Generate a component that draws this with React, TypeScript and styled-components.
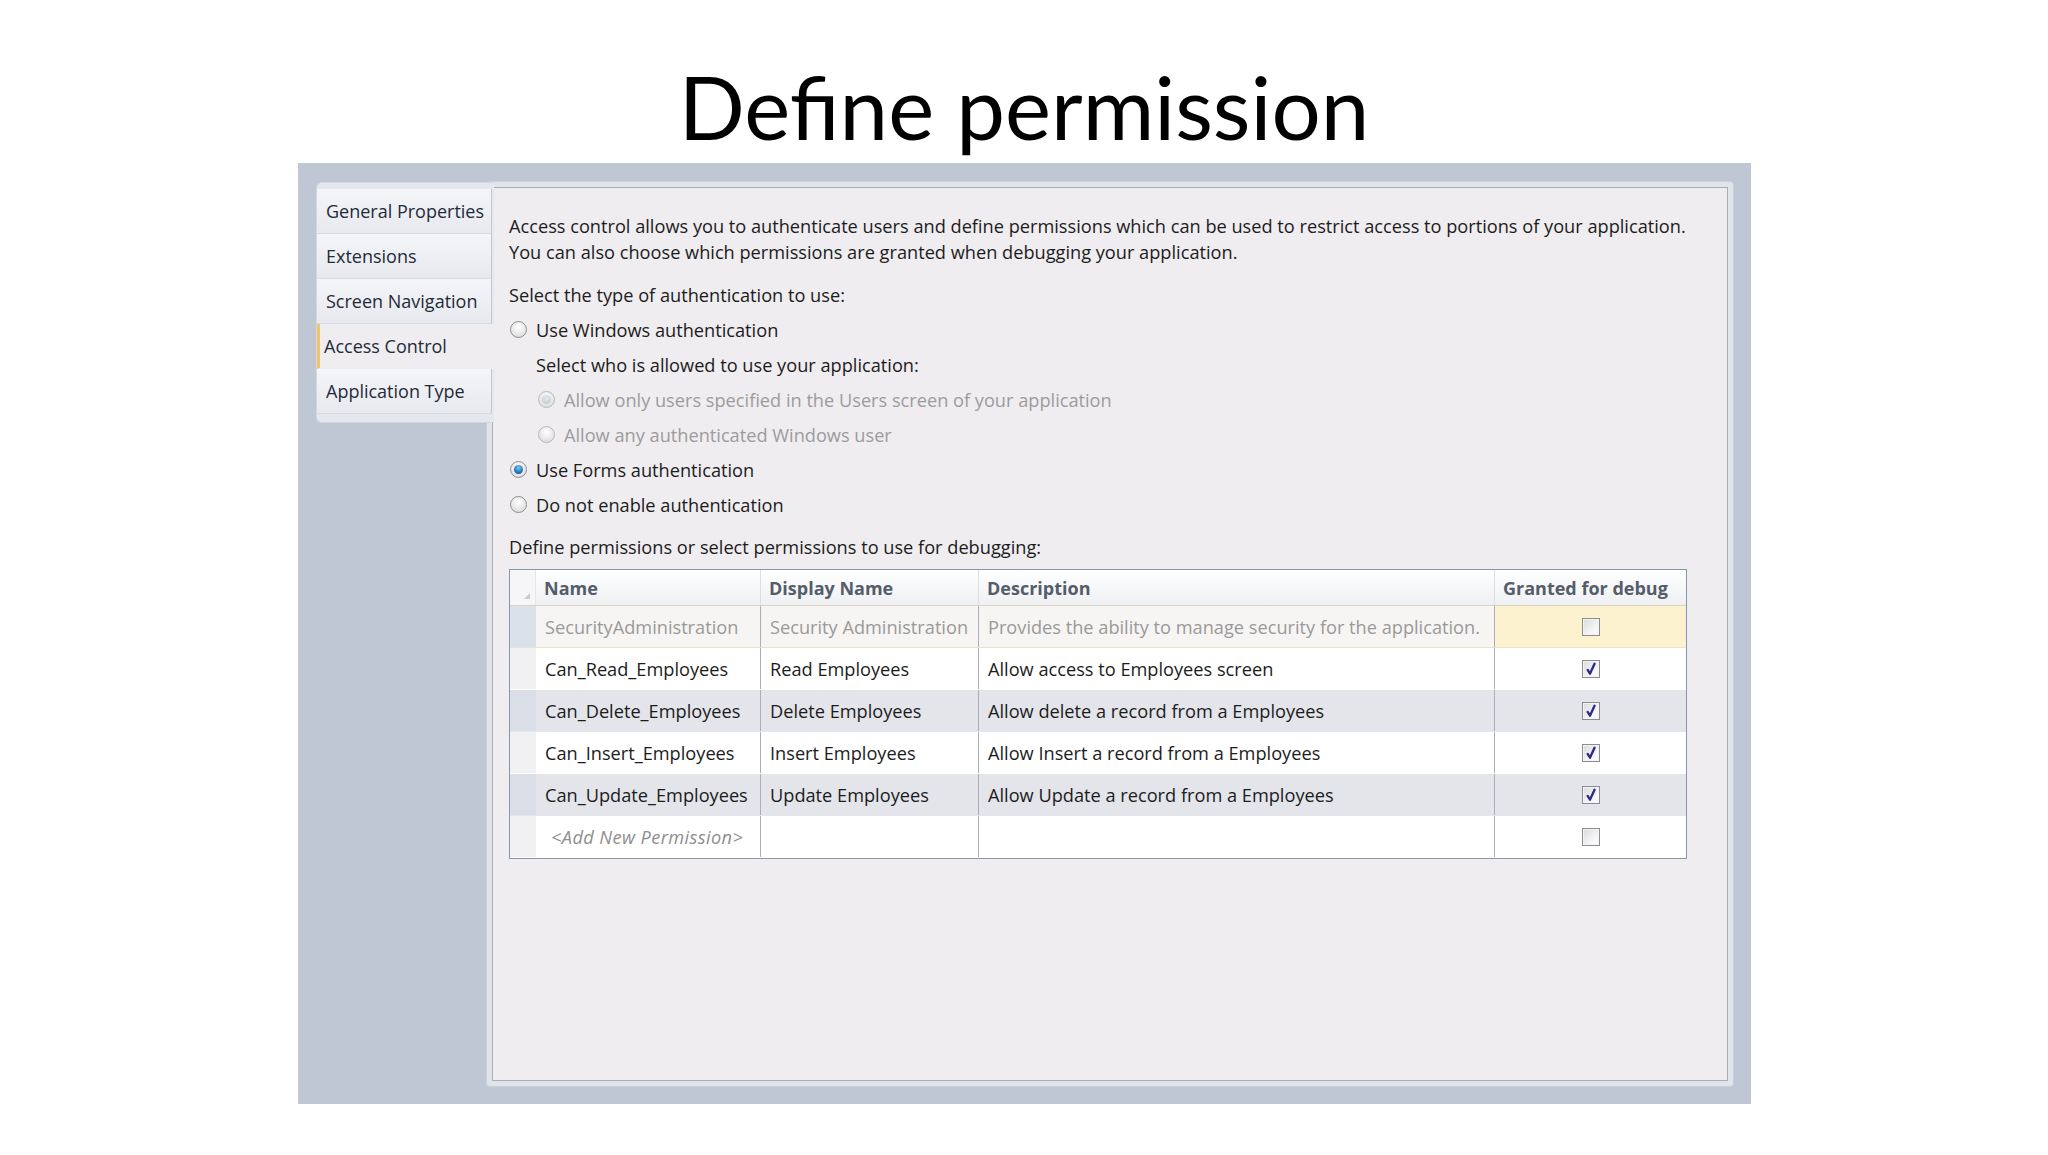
import React from "react";
import styled, { createGlobalStyle } from "styled-components";

const GlobalStyle = createGlobalStyle`
  html, body {
    margin: 0;
    padding: 0;
    background: #ffffff;
  }
  body {
    font-family: "Open Sans", "Noto Sans", sans-serif;
  }
`;

const Slide = styled.div`
  width: 2048px;
  height: 1155px;
  display: flex;
  flex-direction: column;
  align-items: flex-start;
`;

const Title = styled.h1`
  align-self: stretch;
  margin: 55px 0 4px;
  font-family: Lato, "Liberation Sans", sans-serif;
  font-weight: 400;
  font-size: 87px;
  line-height: 104px;
  text-align: center;
  color: #000;
`;

const Frame = styled.div`
  margin-left: 298px;
  width: 1453px;
  height: 941px;
  box-sizing: border-box;
  padding: 18px 17px 17px 18px;
  background: #bfc7d4;
  display: flex;
  align-items: flex-start;
`;

const TabStrip = styled.div`
  position: relative;
  z-index: 1;
  width: 178px;
  margin-top: 1px;
  padding: 6px 0 8px;
  box-sizing: border-box;
  background: #e4e8ee;
  border: 1px solid #d3d8e0;
  border-right: none;
  border-radius: 6px 0 0 6px;
  display: flex;
  flex-direction: column;
`;

const Tab = styled.div<{ $active?: boolean }>`
  height: 45px;
  box-sizing: border-box;
  display: flex;
  align-items: center;
  padding-left: ${(p) => (p.$active ? "4px" : "9px")};
  font-size: 18px;
  color: #1f2b3a;
  white-space: nowrap;
  background: ${(p) => (p.$active ? "#efedf0" : "linear-gradient(#f4f5f8, #e7e9ee)")};
  border-bottom: 1px solid ${(p) => (p.$active ? "#efedf0" : "#d6dae1")};
  border-left: ${(p) => (p.$active ? "3px solid #f1c56c" : "none")};
  border-right: ${(p) => (p.$active ? "none" : "1px solid #c3c8d1")};
  margin-right: ${(p) => (p.$active ? "-3px" : "2px")};
`;

const PanelFrame = styled.div`
  flex: 1;
  align-self: stretch;
  margin-left: -8px;
  box-sizing: border-box;
  padding: 5px;
  border: 1px solid #cbd1da;
  border-radius: 4px;
  background: #e1e5eb;
  display: flex;
`;

const Panel = styled.div`
  flex: 1;
  box-sizing: border-box;
  border: 1px solid #a9adb5;
  background: #efedf0;
  padding: 25px 16px;
  font-size: 18.2px;
  color: #1c1c1c;
`;

const Para = styled.p`
  margin: 0;
  line-height: 26px;
`;

const Label = styled.div<{ $top?: number }>`
  line-height: 26px;
  margin-top: ${(p) => p.$top ?? 0}px;
`;

const OptionRow = styled.div<{ $indent?: boolean; $disabled?: boolean }>`
  height: 35px;
  display: flex;
  align-items: center;
  gap: 9px;
  padding-left: ${(p) => (p.$indent ? "29px" : "1px")};
  color: ${(p) => (p.$disabled ? "#9c9c9c" : "#1c1c1c")};
`;

const SubLabel = styled.span`
  margin-left: -2px;
`;

const RadioDot = styled.span<{ $checked?: boolean; $disabled?: boolean }>`
  width: 15px;
  height: 15px;
  flex: none;
  border-radius: 50%;
  border: 1px solid ${(p) => (p.$disabled ? "#b9b9b9" : "#8f8f8f")};
  background: radial-gradient(circle at 50% 35%, #ffffff 0%, #e6e6e6 60%, #d2d2d2 100%);
  display: flex;
  align-items: center;
  justify-content: center;
  &::after {
    content: "";
    display: ${(p) => (p.$checked ? "block" : "none")};
    width: 9px;
    height: 9px;
    border-radius: 50%;
    background: ${(p) =>
      p.$disabled
        ? "radial-gradient(circle at 50% 35%, #e4ecf2, #b7c3cd)"
        : "radial-gradient(circle at 50% 30%, #7cc4f2, #1669b0 70%, #0d3f70)"};
  }
`;

const Grid = styled.div`
  width: 1178px;
  margin-top: 9px;
  box-sizing: border-box;
  border: 1px solid #8796ad;
  background: #ffffff;
`;

const COLS = "26px 225px 218px 516px 1fr";

const HeaderRow = styled.div`
  display: grid;
  grid-template-columns: ${COLS};
  height: 35px;
  background: linear-gradient(#ffffff, #eef0f3);
  border-bottom: 1px solid #d8d3c3;
`;

const HeadCell = styled.div`
  display: flex;
  align-items: center;
  padding-left: 8px;
  border-right: 1px solid #dcdfe4;
  font-size: 18px;
  font-weight: 700;
  color: #555c6a;
  white-space: nowrap;
  &:last-child {
    border-right: none;
  }
`;

const Corner = styled.div`
  position: relative;
  background: #f6f6f8;
  border-right: 1px solid #e4e6ea;
  &::after {
    content: "";
    position: absolute;
    right: 5px;
    bottom: 6px;
    border-left: 6px solid transparent;
    border-bottom: 6px solid #c9ccd2;
  }
`;

type Tone = "current" | "white" | "gray";

const rowBg: Record<Tone, string> = {
  current: "#f6f5f3",
  white: "#ffffff",
  gray: "#e3e5ea",
};

const headBg: Record<Tone, string> = {
  current: "#dbe1eb",
  white: "#f1f1f3",
  gray: "#d9dee7",
};

const DataRow = styled.div<{ $tone: Tone }>`
  display: grid;
  grid-template-columns: ${COLS};
  height: 42px;
  box-sizing: border-box;
  background: ${(p) => rowBg[p.$tone]};
  color: ${(p) => (p.$tone === "current" ? "#9a9a9a" : "#1c1c1c")};
  border-bottom: 1px solid ${(p) => (p.$tone === "current" ? "#ece4c8" : "transparent")};
`;

const RowHead = styled.div<{ $tone: Tone }>`
  background: ${(p) => headBg[p.$tone]};
`;

const Cell = styled.div<{ $center?: boolean; $hint?: boolean; $flag?: boolean }>`
  display: flex;
  align-items: center;
  justify-content: ${(p) => (p.$center ? "center" : "flex-start")};
  padding-left: ${(p) => (p.$center ? "0" : p.$hint ? "15px" : "9px")};
  border-right: 1px solid #a9afb9;
  white-space: nowrap;
  overflow: hidden;
  font-style: ${(p) => (p.$hint ? "italic" : "normal")};
  letter-spacing: ${(p) => (p.$hint ? "0.4px" : "normal")};
  color: ${(p) => (p.$hint ? "#8e8e8e" : "inherit")};
  background: ${(p) => (p.$flag ? "#fdf2cf" : "transparent")};
  &:last-child {
    border-right: none;
  }
`;

const CheckBox = styled.span`
  width: 18px;
  height: 18px;
  box-sizing: border-box;
  border: 1px solid #8b8d90;
  background: linear-gradient(135deg, #d9dbde, #f7f7f8 70%);
  box-shadow: inset 0 0 0 1px #f4f4f4;
  display: flex;
  align-items: center;
  justify-content: center;
`;

const Check = ({ checked }: { checked: boolean }) => (
  <CheckBox>
    {checked && (
      <svg width="14" height="14" viewBox="0 0 13 13">
        <path
          d="M3.4 7.4 L5.6 10.8 L9.8 1.6"
          fill="none"
          stroke="#2b2a86"
          strokeWidth="2.2"
          strokeLinecap="round"
          strokeLinejoin="round"
        />
      </svg>
    )}
  </CheckBox>
);

const tabs = [
  "General Properties",
  "Extensions",
  "Screen Navigation",
  "Access Control",
  "Application Type",
];

const permissions: {
  name: string;
  display: string;
  desc: string;
  granted: boolean;
  tone: Tone;
}[] = [
  {
    name: "SecurityAdministration",
    display: "Security Administration",
    desc: "Provides the ability to manage security for the application.",
    granted: false,
    tone: "current",
  },
  {
    name: "Can_Read_Employees",
    display: "Read Employees",
    desc: "Allow access to Employees screen",
    granted: true,
    tone: "white",
  },
  {
    name: "Can_Delete_Employees",
    display: "Delete Employees",
    desc: "Allow delete a record from a Employees",
    granted: true,
    tone: "gray",
  },
  {
    name: "Can_Insert_Employees",
    display: "Insert Employees",
    desc: "Allow Insert a record from a Employees",
    granted: true,
    tone: "white",
  },
  {
    name: "Can_Update_Employees",
    display: "Update Employees",
    desc: "Allow Update a record from a Employees",
    granted: true,
    tone: "gray",
  },
];

const App = () => {
  return (
    <Slide>
      <GlobalStyle />
      <Title>Define permission</Title>
      <Frame>
        <TabStrip>
          {tabs.map((t) => (
            <Tab key={t} $active={t === "Access Control"}>
              {t}
            </Tab>
          ))}
        </TabStrip>
        <PanelFrame>
          <Panel>
            <Para>
              Access control allows you to authenticate users and define permissions which can be
              used to restrict access to portions of your application.
              <br />
              You can also choose which permissions are granted when debugging your application.
            </Para>
            <Label $top={17}>Select the type of authentication to use:</Label>
            <OptionRow style={{ marginTop: 4 }}>
              <RadioDot />
              Use Windows authentication
            </OptionRow>
            <OptionRow $indent>
              <SubLabel>Select who is allowed to use your application:</SubLabel>
            </OptionRow>
            <OptionRow $indent $disabled>
              <RadioDot $checked $disabled />
              Allow only users specified in the Users screen of your application
            </OptionRow>
            <OptionRow $indent $disabled>
              <RadioDot $disabled />
              Allow any authenticated Windows user
            </OptionRow>
            <OptionRow>
              <RadioDot $checked />
              Use Forms authentication
            </OptionRow>
            <OptionRow>
              <RadioDot />
              Do not enable authentication
            </OptionRow>
            <Label $top={12}>Define permissions or select permissions to use for debugging:</Label>
            <Grid>
              <HeaderRow>
                <Corner />
                <HeadCell>Name</HeadCell>
                <HeadCell>Display Name</HeadCell>
                <HeadCell>Description</HeadCell>
                <HeadCell>Granted for debug</HeadCell>
              </HeaderRow>
              {permissions.map((p) => (
                <DataRow key={p.name} $tone={p.tone}>
                  <RowHead $tone={p.tone} />
                  <Cell>{p.name}</Cell>
                  <Cell>{p.display}</Cell>
                  <Cell>{p.desc}</Cell>
                  <Cell $center $flag={p.tone === "current"}>
                    <Check checked={p.granted} />
                  </Cell>
                </DataRow>
              ))}
              <DataRow $tone="white">
                <RowHead $tone="white" />
                <Cell $hint>&lt;Add New Permission&gt;</Cell>
                <Cell />
                <Cell />
                <Cell $center>
                  <Check checked={false} />
                </Cell>
              </DataRow>
            </Grid>
          </Panel>
        </PanelFrame>
      </Frame>
    </Slide>
  );
};

export default App;
